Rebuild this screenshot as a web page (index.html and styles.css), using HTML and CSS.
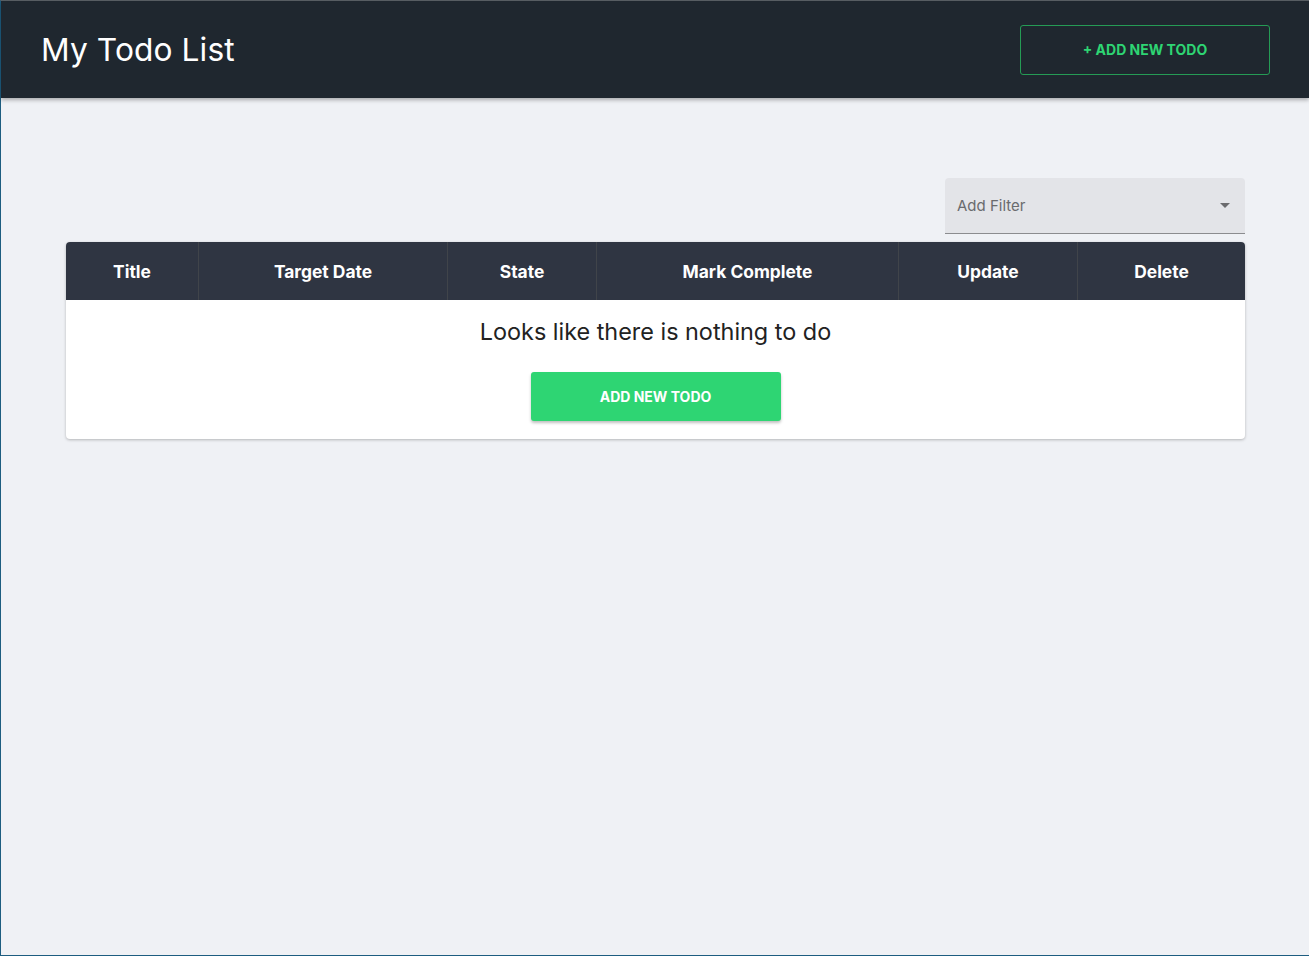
FILE: index.html
```html
<!DOCTYPE html>
<html>
<head>
<meta charset="utf-8">
<link rel="stylesheet" href="styles.css">
</head>
<body>
<div class="frame">
  <header class="topbar">
    <h1 class="brand">My Todo List</h1>
    <button class="btn-outline">+ ADD NEW TODO</button>
  </header>
  <main class="content">
    <div class="filter-row">
      <div class="filter">
        <span class="filter-label">Add Filter</span>
        <svg class="caret" width="10" height="5" viewBox="0 0 10 5"><path d="M0 0h10L5 5z" fill="#6b6b6e"/></svg>
      </div>
    </div>
    <div class="card">
      <div class="thead">
        <div class="th c1">Title</div>
        <div class="th c2">Target Date</div>
        <div class="th c3">State</div>
        <div class="th c4">Mark Complete</div>
        <div class="th c5">Update</div>
        <div class="th c6">Delete</div>
      </div>
      <div class="empty">
        <p class="empty-text">Looks like there is nothing to do</p>
        <button class="btn-solid">ADD NEW TODO</button>
      </div>
    </div>
  </main>
</div>
</body>
</html>
```
FILE: styles.css
```css
* { box-sizing: border-box; }
html, body { margin: 0; padding: 0; }
body {
  font-family: "Inter", "Noto Sans", sans-serif;
  background: #eff1f5;
}
.frame {
  height: 956px;
  border-top: 1px solid #5b6166;
  border-left: 1px solid #1d5d80;
  border-bottom: 1px solid #1d5d80;
  background: #eff1f5;
  display: flex;
  flex-direction: column;
}
.topbar {
  height: 97px;
  background: #1f272f;
  display: flex;
  align-items: center;
  justify-content: space-between;
  padding: 0 39px 0 40px;
  box-shadow: 0 2px 4px rgba(0,0,0,0.3);
  position: relative;
  z-index: 1;
}
.brand {
  margin: 0;
  color: #fff;
  font-weight: 400;
  font-size: 31.7px;
  letter-spacing: 0.1px;
}
.btn-outline {
  width: 250px;
  height: 50px;
  background: transparent;
  border: 1px solid #259b55;
  border-radius: 3px;
  color: #2ed573;
  font-family: inherit;
  font-weight: 700;
  font-size: 14px;
}
.content {
  padding: 80px 64px 0 65px;
}
.filter-row {
  display: flex;
  justify-content: flex-end;
  margin-bottom: 8px;
}
.filter {
  width: 300px;
  height: 56px;
  background: #e3e4e8;
  border-radius: 4px 4px 0 0;
  border-bottom: 1px solid #8b8c8f;
  display: flex;
  align-items: center;
  justify-content: space-between;
  padding: 0 15px 0 12px;
}
.filter-label {
  color: #6a6b6e;
  font-size: 15px;
}
.caret { display: block; }
.card {
  background: #fff;
  border-radius: 4px;
  box-shadow: 0 1px 3px rgba(0,0,0,0.25);
  overflow: hidden;
}
.thead {
  display: grid;
  grid-template-columns: 133px 249px 149px 302px 179px 1fr;
  height: 58px;
  background: #2f3542;
}
.th {
  display: flex;
  align-items: center;
  justify-content: center;
  color: #fff;
  font-weight: 700;
  font-size: 17.4px;
  border-right: 1px solid #40444a;
}
.th.c6 { border-right: none; }
.empty {
  display: flex;
  flex-direction: column;
  align-items: center;
  padding: 16px 0 18px;
}
.empty-text {
  margin: 0;
  font-size: 23.4px;
  color: #222;
  line-height: 32px;
}
.btn-solid {
  margin-top: 24px;
  width: 250px;
  height: 49px;
  background: #2ed573;
  border: none;
  border-radius: 3px;
  color: #fff;
  font-family: inherit;
  font-weight: 700;
  font-size: 14px;
  box-shadow: 0 2px 3px rgba(0,0,0,0.25);
}
```
